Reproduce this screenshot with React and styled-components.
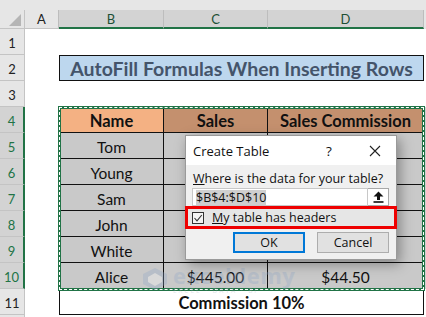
import React from 'react';
import styled, { createGlobalStyle } from 'styled-components';

const GREEN = '#217346';

const GlobalStyle = createGlobalStyle`
  html, body {
    margin: 0;
    padding: 0;
    background: #fff;
    overflow: hidden;
  }
  body {
    font-family: Lato, "Liberation Sans", sans-serif;
  }
`;

const Sheet = styled.div`
  position: relative;
  width: 426px;
  height: 317px;
  display: grid;
  grid-template-columns: 25px 34px 105px 104px 156px 2px;
  grid-template-rows: 10px 19px repeat(11, 26px) 2px;
  background: #fff;
  overflow: hidden;
`;

const TopBand = styled.div`
  grid-column: 1 / -1;
  background: #e6e6e6;
`;

const Corner = styled.div`
  position: relative;
  background: #e6e6e6;
  border-right: 1px solid #c4c4c4;
  border-bottom: 1px solid #c4c4c4;
  &::after {
    content: '';
    position: absolute;
    right: 3px;
    bottom: 2px;
    border-left: 12px solid transparent;
    border-bottom: 12px solid #b5b5b5;
  }
`;

const ColHead = styled.div`
  display: flex;
  align-items: center;
  justify-content: center;
  box-sizing: border-box;
  background: ${p => (p.$sel ? '#d3d3d3' : '#e6e6e6')};
  color: ${p => (p.$sel ? '#1d4f35' : '#222')};
  border-right: 1px solid #bdbdbd;
  border-bottom: ${p => (p.$sel ? `2px solid ${GREEN}` : '1px solid #c4c4c4')};
  font-size: 13px;
`;

const RowHead = styled.div`
  display: flex;
  align-items: center;
  justify-content: center;
  box-sizing: border-box;
  background: ${p => (p.$sel ? '#d3d3d3' : '#e6e6e6')};
  color: ${p => (p.$sel ? GREEN : '#222')};
  border-right: ${p => (p.$sel ? `2px solid ${GREEN}` : '1px solid #c4c4c4')};
  border-bottom: 1px solid #c4c4c4;
  font-size: 13px;
  padding-top: 3px;
`;

const Blank = styled.div`
  grid-column: ${p => p.$span || 'auto'};
  background: ${p => p.$bg || '#fff'};
`;

const TitleCell = styled.div`
  grid-column: 3 / span 3;
  display: flex;
  align-items: center;
  justify-content: center;
  box-sizing: border-box;
  background: #bdd7ee;
  border: 1px solid #111;
  color: #44546a;
  font-weight: 700;
  font-size: 19.5px;
  padding-top: 1px;
`;

const Cell = styled.div`
  display: flex;
  align-items: center;
  justify-content: center;
  box-sizing: border-box;
  background: ${p => p.$bg};
  border-right: 1px solid #111;
  border-bottom: 1px solid #111;
  border-left: ${p => (p.$first ? '1px solid #111' : 'none')};
  color: #111;
  font-size: ${p => (p.$head ? '16.5px' : '15.5px')};
  font-weight: ${p => (p.$head ? 700 : 400)};
  padding-top: 2px;
`;

const TotalCell = styled.div`
  grid-column: 3 / span 3;
  display: flex;
  align-items: center;
  justify-content: center;
  box-sizing: border-box;
  border: 1px solid #111;
  border-top: none;
  font-weight: 700;
  font-size: 16.5px;
  color: #111;
  padding-top: 2px;
`;

const Ants = styled.div`
  position: absolute;
  left: 58px;
  top: 106px;
  width: 367px;
  height: 185px;
  box-sizing: border-box;
  border: 3px solid ${GREEN};
  pointer-events: none;
  &::after {
    content: '';
    position: absolute;
    inset: -2px;
    border: 1px dashed #fff;
  }
`;

const Watermark = styled.div`
  position: absolute;
  left: 142px;
  top: 264px;
  display: flex;
  align-items: center;
  gap: 5px;
  opacity: 0.3;
  pointer-events: none;
`;

const MarkWords = styled.div`
  display: flex;
  flex-direction: column;
  line-height: 1;
`;

const MarkName = styled.span`
  font-family: "Open Sans", sans-serif;
  font-size: 22px;
  font-weight: 700;
  color: #8fa7c8;
  letter-spacing: 0.5px;
`;

const MarkTag = styled.span`
  font-family: "Open Sans", sans-serif;
  font-size: 6.5px;
  color: #9aa8b8;
  letter-spacing: 2px;
  margin-top: 2px;
`;

const Dialog = styled.div`
  position: absolute;
  left: 185px;
  top: 135px;
  width: 212px;
  height: 125px;
  box-sizing: border-box;
  background: #f0f0f0;
  border: 1px solid #9a9a9a;
  box-shadow: 3px 4px 12px rgba(0, 0, 0, 0.35);
  display: flex;
  flex-direction: column;
  font-family: "Open Sans", "Noto Sans", sans-serif;
  font-size: 12.5px;
  color: #111;
`;

const TitleBar = styled.div`
  height: 29px;
  background: #fff;
  display: flex;
  align-items: center;
  padding-left: 7px;
  font-size: 13px;
`;

const TitleText = styled.span`
  flex: 1;
`;

const HelpMark = styled.span`
  width: 20px;
  text-align: center;
  font-size: 13.5px;
  margin-right: 25px;
`;

const CloseBox = styled.span`
  width: 22px;
  display: flex;
  justify-content: center;
  margin-right: 10px;
`;

const Label = styled.div`
  margin: 5px 0 0 7px;
  height: 17px;
`;

const Key = styled.span`
  text-decoration: underline;
`;

const InputRow = styled.div`
  display: flex;
  height: 18px;
  margin: 1px 7px 0 6px;
`;

const RangeInput = styled.div`
  flex: 1;
  box-sizing: border-box;
  background: #fff;
  border: 1px solid #c8c8c8;
  display: flex;
  align-items: center;
  padding-left: 3px;
`;

const Selected = styled.span`
  background: #cfcfcf;
  line-height: 15px;
`;

const PickButton = styled.div`
  width: 21px;
  box-sizing: border-box;
  background: #fff;
  border: 1px solid #a8a8a8;
  border-left: none;
  display: flex;
  align-items: center;
  justify-content: center;
`;

const CheckRow = styled.div`
  height: 23px;
  box-sizing: border-box;
  margin: 0 -1px;
  border: 3px solid #ee0000;
  background: #e6e6e6;
  display: flex;
  align-items: center;
  gap: 8px;
  padding-left: 4px;
`;

const Box = styled.span`
  width: 12px;
  height: 12px;
  box-sizing: border-box;
  border: 1px solid #333;
  background: #f4f4f4;
  display: flex;
  align-items: center;
  justify-content: center;
`;

const ButtonRow = styled.div`
  display: flex;
  justify-content: flex-end;
  gap: 12px;
  margin: 3px 7px 0 0;
`;

const Button = styled.div`
  width: 72px;
  height: 21px;
  box-sizing: border-box;
  background: #e1e1e1;
  border: ${p => (p.$primary ? '2px solid #0078d7' : '1px solid #adadad')};
  display: flex;
  align-items: center;
  justify-content: center;
`;

const cols = ['A', 'B', 'C', 'D'];

const people = [
  ['Tom', '', ''],
  ['Young', '', ''],
  ['Sam', '', ''],
  ['John', '', ''],
  ['White', '', ''],
  ['Alice', '$445.00', '$44.50'],
];

function App() {
  return (
    <>
      <GlobalStyle />
      <Sheet>
        <TopBand />
        <Corner />
        {cols.map(c => (
          <ColHead key={c} $sel={c !== 'A'}>{c}</ColHead>
        ))}
        <Blank $bg="#e6e6e6" />

        <RowHead>1</RowHead>
        <Blank $span="2 / -1" />

        <RowHead>2</RowHead>
        <Blank />
        <TitleCell>AutoFill Formulas When Inserting Rows</TitleCell>
        <Blank />

        <RowHead>3</RowHead>
        <Blank $span="2 / -1" />

        <RowHead $sel>4</RowHead>
        <Blank />
        <Cell $head $first $bg="#f4b183">Name</Cell>
        <Cell $head $bg="#c4906e">Sales</Cell>
        <Cell $head $bg="#c4906e">Sales Commission</Cell>
        <Blank $bg="#d0d0d0" />

        {people.map((row, i) => (
          <React.Fragment key={row[0]}>
            <RowHead $sel>{i + 5}</RowHead>
            <Blank />
            <Cell $first $bg="#c9c9c9">{row[0]}</Cell>
            <Cell $bg="#c9c9c9">{row[1]}</Cell>
            <Cell $bg="#c9c9c9">{row[2]}</Cell>
            <Blank $bg="#d0d0d0" />
          </React.Fragment>
        ))}

        <RowHead>11</RowHead>
        <Blank />
        <TotalCell>Commission 10%</TotalCell>
        <Blank />

        <RowHead />
        <Blank $span="2 / -1" />

        <Ants />

        <Watermark>
          <svg width="26" height="24" viewBox="0 0 26 24">
            <path d="M13 1 L25 7 L25 17 L13 23 L1 17 L1 7 Z" fill="#8fa7c8" />
            <path d="M13 6 L20 10 L20 15 L13 19 L6 15 L6 10 Z" fill="#fff" />
          </svg>
          <MarkWords>
            <MarkName>exceldemy</MarkName>
            <MarkTag>EXCEL · DATA · BI</MarkTag>
          </MarkWords>
        </Watermark>

        <Dialog>
          <TitleBar>
            <TitleText>Create Table</TitleText>
            <HelpMark>?</HelpMark>
            <CloseBox>
              <svg width="12" height="12" viewBox="0 0 12 12">
                <path d="M1 1 L11 11 M11 1 L1 11" stroke="#222" strokeWidth="1.1" />
              </svg>
            </CloseBox>
          </TitleBar>
          <Label>
            <Key>W</Key>here is the data for your table?
          </Label>
          <InputRow>
            <RangeInput>
              <Selected>$B$4:$D$10</Selected>
            </RangeInput>
            <PickButton>
              <svg width="11" height="12" viewBox="0 0 11 12">
                <path d="M5.5 0.5 L10.5 5.5 L7 5.5 L7 9 L4 9 L4 5.5 L0.5 5.5 Z" fill="#111" />
                <rect x="0.5" y="10.2" width="10" height="1.6" fill="#111" />
              </svg>
            </PickButton>
          </InputRow>
          <CheckRow>
            <Box>
              <svg width="10" height="10" viewBox="0 0 10 10">
                <path d="M1.5 5 L4 7.8 L8.8 2" fill="none" stroke="#333" strokeWidth="1.1" />
              </svg>
            </Box>
            <span>
              <Key>M</Key>y table has headers
            </span>
          </CheckRow>
          <ButtonRow>
            <Button $primary>OK</Button>
            <Button>Cancel</Button>
          </ButtonRow>
        </Dialog>
      </Sheet>
    </>
  );
}

export default App;
